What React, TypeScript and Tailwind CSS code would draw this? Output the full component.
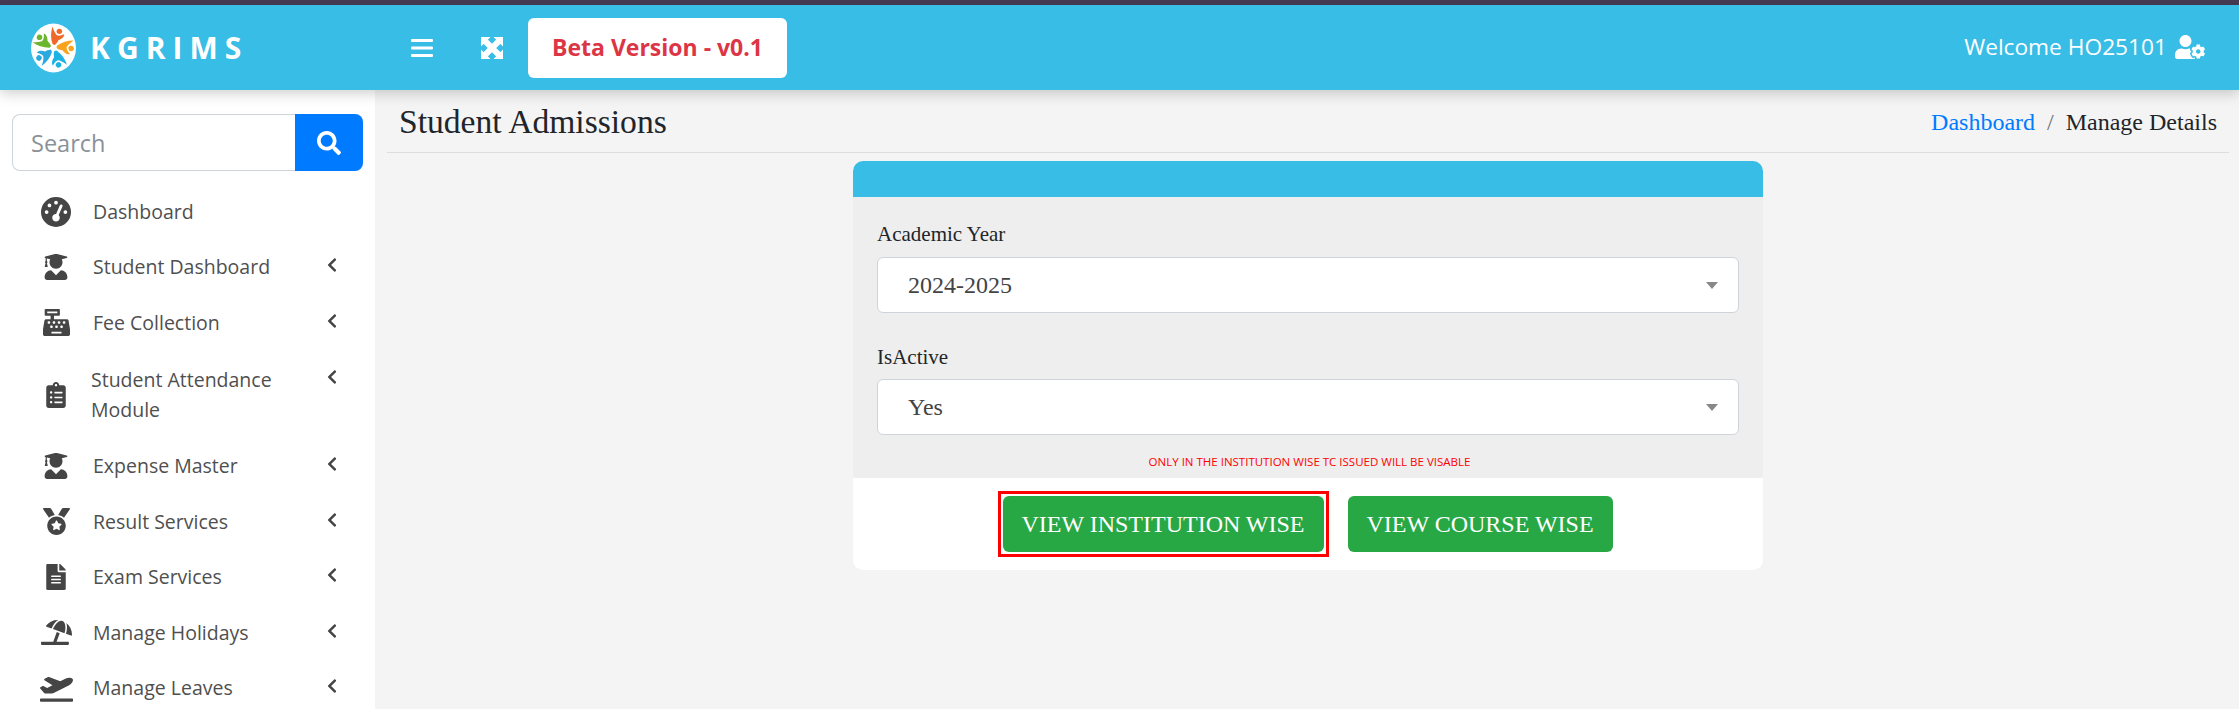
import React from 'react';
import {
  FaSearch, FaUserGraduate, FaCashRegister,
  FaClipboardList, FaMedal, FaFileAlt, FaUmbrellaBeach, FaPlaneDeparture, FaChevronLeft, FaUserCog,
} from 'react-icons/fa';
import { FaGaugeHigh } from 'react-icons/fa6';

const menu = [
  { label: 'Dashboard', icon: FaGaugeHigh, size: 30, arrow: false },
  { label: 'Student Dashboard', icon: FaUserGraduate, size: 26, arrow: true },
  { label: 'Fee Collection', icon: FaCashRegister, size: 27, arrow: true },
  { label: 'Student Attendance Module', icon: FaClipboardList, size: 26, arrow: true, wrap: true },
  { label: 'Expense Master', icon: FaUserGraduate, size: 26, arrow: true },
  { label: 'Result Services', icon: FaMedal, size: 27, arrow: true },
  { label: 'Exam Services', icon: FaFileAlt, size: 26, arrow: true },
  { label: 'Manage Holidays', icon: FaUmbrellaBeach, size: 31, arrow: true },
  { label: 'Manage Leaves', icon: FaPlaneDeparture, size: 33, arrow: true },
];

const figures = [
  { angle: 0, color: '#ef6a2a' },
  { angle: 72, color: '#f9a21d' },
  { angle: 144, color: '#1eb1e4' },
  { angle: 216, color: '#2aa9e0' },
  { angle: 288, color: '#6cb52f' },
];

const Logo = () => (
  <svg width="45" height="50" viewBox="-23 -25 46 50">
    <ellipse cx="0" cy="0" rx="23" ry="25" fill="#fff" />
    {figures.map(f => (
      <g key={f.angle} transform={`rotate(${f.angle})`} fill={f.color}>
        <path d="M-1 -4 C-3 -10 -3 -16 -1 -22 C0 -19 0.5 -17 2 -15 C3 -12 6 -12 11 -14 C11 -11 8 -9 5 -8 C4 -6 3 -4 1 -3 Z" />
        <circle cx="6" cy="-17" r="2.8" />
      </g>
    ))}
  </svg>
);

const MenuBars = () => (
  <svg width="22" height="18" viewBox="0 0 22 18" fill="#fff">
    <rect x="0" y="0" width="22" height="3" rx="1" />
    <rect x="0" y="7.5" width="22" height="3" rx="1" />
    <rect x="0" y="15" width="22" height="3" rx="1" />
  </svg>
);

const FullscreenIcon = () => (
  <svg width="22" height="22" viewBox="0 0 22 22" fill="#fff" stroke="#fff" strokeWidth="0">
    <path d="M0 0H9.5L0 9.5Z M22 0V9.5L12.5 0Z M22 22H12.5L22 12.5Z M0 22V12.5L9.5 22Z" />
    <path d="M2 2L20 20M20 2L2 20" strokeWidth="6" />
  </svg>
);

const SelectBox = ({ value }: { value: string }) => (
  <div className="flex h-[56px] items-center justify-between rounded-[6px] border border-[#ced4da] bg-white pl-[30px] pr-[20px] text-[24px] text-[#444]">
    <span>{value}</span>
    <span className="h-0 w-0 border-x-[6px] border-t-[7px] border-x-transparent border-t-[#888]" />
  </div>
);

export default function App() {
  return (
    <div className="flex h-[709px] flex-col overflow-hidden bg-[#f4f4f4] font-['Open_Sans',sans-serif]">
      <div className="h-[5px] shrink-0 bg-[#453a52]" />

      {/* Top bar */}
      <header className="relative z-10 flex h-[85px] shrink-0 items-center bg-[#38bde6] shadow-[0_4px_12px_rgba(0,0,0,0.18)]">
        <div className="flex w-[411px] items-center pl-[31px]">
          <Logo />
          <span className="ml-[14px] text-[30px] font-bold tracking-[7px] text-white">KGRIMS</span>
        </div>
        <MenuBars />
        <span className="ml-[48px]">
          <FullscreenIcon />
        </span>
        <div className="ml-[25px] flex h-[60px] w-[259px] items-center justify-center rounded-[6px] bg-white text-[23px] font-bold text-[#dc3545]">
          Beta Version - v0.1
        </div>
        <div className="ml-auto flex items-center pr-[34px] text-[22.7px] text-white">
          <span>Welcome HO25101</span>
          <FaUserCog size={30} className="ml-[8px]" />
        </div>
      </header>

      <div className="flex min-h-0 flex-1">
        {/* Sidebar */}
        <aside className="w-[375px] shrink-0 bg-white pt-[24px]">
          <div className="mx-[12px] flex h-[57px] w-[351px]">
            <div className="flex flex-1 items-center rounded-l-[8px] border border-r-0 border-[#ced4da] pl-[18px] pt-[2px] text-[23.5px] text-[#8a9199]">
              Search
            </div>
            <div className="flex w-[68px] items-center justify-center rounded-r-[8px] bg-[#007bff] text-white">
              <FaSearch size={24} />
            </div>
          </div>
          <nav className="mt-[13px] text-[19.5px] leading-[30px] text-[#4f4f4f]">
            {menu.map(item => {
              const Icon = item.icon;
              return (
                <div key={item.label} className={item.wrap ? 'flex items-center py-[14px] pl-[36px]' : 'flex items-center py-[12.75px] pl-[36px]'}>
                  <span className="flex h-[30px] w-[40px] items-center justify-center text-[#454545]">
                    <Icon size={item.size} className="shrink-0" />
                  </span>
                  <span className={item.wrap ? 'ml-[15px] w-[233px]' : 'ml-[17px] w-[231px]'}>{item.label}</span>
                  {item.arrow && (
                    <FaChevronLeft size={16} className={item.wrap ? 'mb-[36px] text-[#454545]' : 'mb-[4px] text-[#454545]'} />
                  )}
                </div>
              );
            })}
          </nav>
        </aside>

        {/* Content */}
        <main className="flex-1 font-['Liberation_Serif',serif] text-[#212529]">
          <div className="ml-[12px] mr-[10px] flex h-[63px] items-center justify-between border-b border-[#dcdcdc] pl-[12px] pr-[12px] pt-[2px]">
            <h1 className="text-[33.6px]">Student Admissions</h1>
            <div className="flex items-center text-[24px]">
              <span className="text-[#007bff]">Dashboard</span>
              <span className="mx-[12px] text-[#6c757d]">/</span>
              <span>Manage Details</span>
            </div>
          </div>

          <div className="mx-auto mt-[8px] w-[910px] translate-x-px overflow-hidden rounded-[10px] bg-white">
            <div className="h-[36px] bg-[#38bde6]" />
            <div className="bg-[#eeeeee] px-[24px] pt-[22px]">
              <label className="mb-[8px] block text-[21px] leading-[30px]">Academic Year</label>
              <SelectBox value="2024-2025" />
              <label className="mb-[7px] mt-[29px] block text-[21px] leading-[30px]">IsActive</label>
              <SelectBox value="Yes" />
              <p className="pt-[19px] pb-[8px] pl-[3px] text-center text-[11.5px] leading-[16px] text-[#ff0000] font-['Open_Sans',sans-serif]">
                ONLY IN THE INSTITUTION WISE TC ISSUED WILL BE VISABLE
              </p>
            </div>
            <div className="flex h-[92px] items-center justify-center gap-[19px] pr-[6px] text-[24px] text-white">
              <div className="border-[3px] border-[#ff0000] p-[2px]">
                <button className="block h-[56px] w-[321px] rounded-[6px] bg-[#28a745]">VIEW INSTITUTION WISE</button>
              </div>
              <button className="h-[56px] w-[265px] rounded-[6px] bg-[#28a745]">VIEW COURSE WISE</button>
            </div>
          </div>
        </main>
      </div>
    </div>
  );
}
